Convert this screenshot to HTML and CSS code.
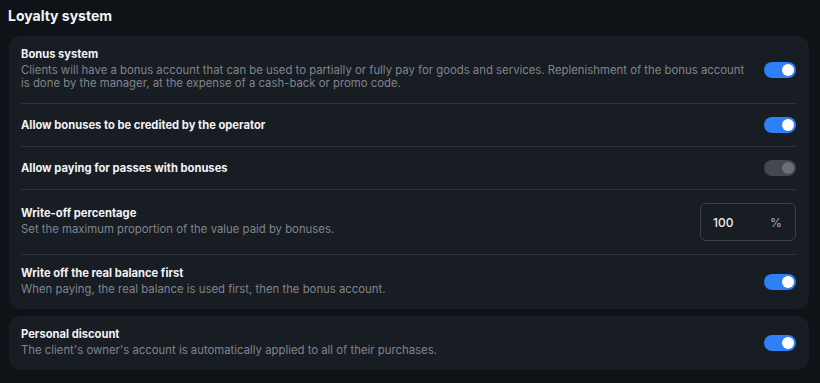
FILE: index.html
```html
<!DOCTYPE html>
<html lang="en">
<head>
<meta charset="utf-8">
<title>Loyalty system</title>
<link rel="stylesheet" href="styles.css">
</head>
<body>
<main class="page">
  <h1 class="page-title">Loyalty system</h1>
  <div class="cards">
    <section class="card">
      <div class="row">
        <div class="row-text">
          <div class="row-title">Bonus system</div>
          <div class="row-desc">Clients will have a bonus account that can be used to partially or fully pay for goods and services. Replenishment of the bonus account is done by the manager, at the expense of a cash-back or promo code.</div>
        </div>
        <span class="toggle on"><span class="knob"></span></span>
      </div>
      <div class="row">
        <div class="row-text">
          <div class="row-title">Allow bonuses to be credited by the operator</div>
        </div>
        <span class="toggle on"><span class="knob"></span></span>
      </div>
      <div class="row">
        <div class="row-text">
          <div class="row-title">Allow paying for passes with bonuses</div>
        </div>
        <span class="toggle disabled"><span class="knob"></span></span>
      </div>
      <div class="row">
        <div class="row-text">
          <div class="row-title">Write-off percentage</div>
          <div class="row-desc">Set the maximum proportion of the value paid by bonuses.</div>
        </div>
        <div class="input-box">
          <span class="input-value">100</span>
          <span class="input-unit">%</span>
        </div>
      </div>
      <div class="row">
        <div class="row-text">
          <div class="row-title">Write off the real balance first</div>
          <div class="row-desc">When paying, the real balance is used first, then the bonus account.</div>
        </div>
        <span class="toggle on"><span class="knob"></span></span>
      </div>
    </section>
    <section class="card">
      <div class="row">
        <div class="row-text">
          <div class="row-title">Personal discount</div>
          <div class="row-desc">The client's owner's account is automatically applied to all of their purchases.</div>
        </div>
        <span class="toggle on"><span class="knob"></span></span>
      </div>
    </section>
  </div>
</main>
</body>
</html>
```

FILE: styles.css
```css
* { box-sizing: border-box; }

html, body {
  margin: 0;
  padding: 0;
  background: #0f1216;
  font-family: Inter, "Noto Sans", "Liberation Sans", sans-serif;
  color: #f2f3f5;
}

.page {
  padding: 6px 11px 0 9px;
}

.page-title {
  margin: 0 0 10px -1px;
  font-size: 14px;
  line-height: 20px;
  font-weight: 700;
  color: #f4f5f7;
}

.cards {
  display: flex;
  flex-direction: column;
  gap: 7px;
}

.card {
  background: #181c23;
  border-radius: 12px;
  padding: 0 13px 0 12px;
}

.row {
  display: flex;
  align-items: center;
  justify-content: space-between;
  gap: 10px;
  padding: 13px 0;
}

.row + .row {
  border-top: 1px solid #30343b;
}

.row-text {
  display: flex;
  flex-direction: column;
  min-width: 0;
}

.row-title {
  font-size: 11.2px;
  line-height: 11px;
  font-weight: 700;
  color: #f2f3f5;
}

.row-desc {
  margin-top: 4px;
  font-size: 11.35px;
  line-height: 13px;
  font-weight: 400;
  color: #80858d;
}

.toggle {
  position: relative;
  flex: 0 0 auto;
  width: 32px;
  height: 16px;
  border-radius: 8px;
  background: #2f80f6;
}

.toggle .knob {
  position: absolute;
  top: 2px;
  right: 2px;
  width: 12px;
  height: 12px;
  border-radius: 50%;
  background: #ffffff;
}

.toggle.disabled {
  background: #44474d;
}

.toggle.disabled .knob {
  background: #6b6e73;
}

.input-box {
  flex: 0 0 auto;
  width: 96px;
  height: 38px;
  border: 1px solid #3b3f46;
  border-radius: 6px;
  display: flex;
  align-items: center;
  justify-content: space-between;
  padding: 0 13px 0 12px;
}

.input-value {
  font-size: 12px;
  font-weight: 500;
  color: #eceef1;
}

.input-unit {
  font-size: 12px;
  font-weight: 500;
  color: #9a9ea5;
}
```
